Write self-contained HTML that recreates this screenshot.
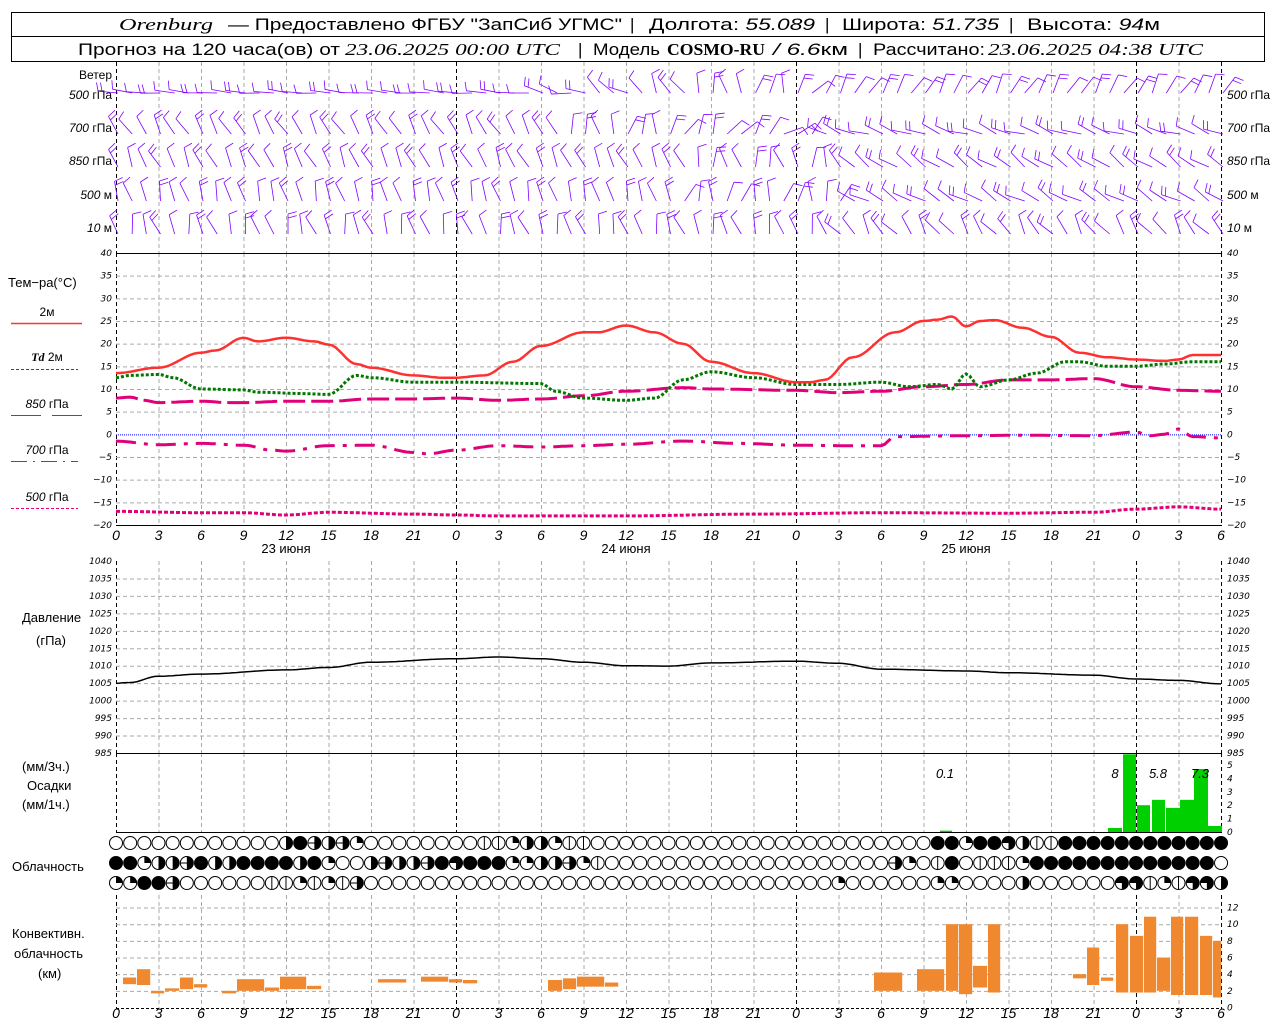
<!DOCTYPE html>
<html><head><meta charset="utf-8"><style>
html,body{margin:0;padding:0;background:#fff;width:1280px;height:1024px;overflow:hidden}
svg{display:block}
text{font-family:"Liberation Sans",sans-serif}
.it{font-style:italic}
</style></head><body>
<svg id="s" width="1280" height="1024" xmlns="http://www.w3.org/2000/svg">
<rect x="11.5" y="12.5" width="1253" height="49" fill="none" stroke="#000"/>
<line x1="11" y1="36.5" x2="1265" y2="36.5" stroke="#000"/>
<g font-size="17" fill="#000">
<text x="119" y="30" textLength="94" lengthAdjust="spacingAndGlyphs" style="font-family:'Liberation Serif',serif;font-style:italic">Orenburg</text>
<text x="228" y="30" textLength="394" lengthAdjust="spacingAndGlyphs">— Предоставлено ФГБУ "ЗапСиб УГМС"</text>
<text x="630" y="30">|</text>
<text x="649" y="30" textLength="166" lengthAdjust="spacingAndGlyphs">Долгота: <tspan class="it">55.089</tspan></text>
<text x="825" y="30">|</text>
<text x="842" y="30" textLength="157" lengthAdjust="spacingAndGlyphs">Широта: <tspan class="it">51.735</tspan></text>
<text x="1009" y="30">|</text>
<text x="1027" y="30" textLength="133" lengthAdjust="spacingAndGlyphs">Высота: <tspan class="it">94</tspan>м</text>
<text x="78" y="55" textLength="262" lengthAdjust="spacingAndGlyphs">Прогноз на 120 часа(ов) от</text>
<text x="345" y="55" textLength="215" lengthAdjust="spacingAndGlyphs" style="font-family:'Liberation Serif',serif;font-style:italic">23.06.2025 00:00 UTC</text>
<text x="578" y="55">|</text>
<text x="593" y="55" textLength="67" lengthAdjust="spacingAndGlyphs">Модель</text>
<text x="667" y="55" textLength="98" lengthAdjust="spacingAndGlyphs" style="font-family:'Liberation Serif',serif;font-weight:bold">COSMO-RU</text>
<text x="773" y="55" textLength="75" lengthAdjust="spacingAndGlyphs"><tspan class="it">/ 6.6</tspan>км</text>
<text x="858" y="55">|</text>
<text x="873" y="55" textLength="112" lengthAdjust="spacingAndGlyphs">Рассчитано:</text>
<text x="988" y="55" textLength="215" lengthAdjust="spacingAndGlyphs" style="font-family:'Liberation Serif',serif;font-style:italic">23.06.2025 04:38 UTC</text>
</g>
<g font-size="12" fill="#000">
<text x="112" y="79" text-anchor="end">Ветер</text>
<text x="112" y="99" text-anchor="end"><tspan class="it">500</tspan> гПа</text>
<text x="112" y="132" text-anchor="end"><tspan class="it">700</tspan> гПа</text>
<text x="112" y="165" text-anchor="end"><tspan class="it">850</tspan> гПа</text>
<text x="112" y="199" text-anchor="end"><tspan class="it">500</tspan> м</text>
<text x="112" y="232" text-anchor="end"><tspan class="it">10</tspan>   м</text>
<text x="1227" y="99"><tspan class="it">500</tspan> гПа</text>
<text x="1227" y="132"><tspan class="it">700</tspan> гПа</text>
<text x="1227" y="165"><tspan class="it">850</tspan> гПа</text>
<text x="1227" y="199"><tspan class="it">500</tspan> м</text>
<text x="1227" y="232"><tspan class="it">10</tspan>   м</text>
<text x="8" y="287" font-size="13">Тем−ра(°C)</text>
<text x="47" y="316" text-anchor="middle">2м</text>
<text x="47" y="361" text-anchor="middle"><tspan class="it" font-weight="bold" style="font-family:'Liberation Serif',serif">Td</tspan>  2м</text>
<text x="47" y="408" text-anchor="middle"><tspan class="it">850</tspan> гПа</text>
<text x="47" y="454" text-anchor="middle"><tspan class="it">700</tspan> гПа</text>
<text x="47" y="501" text-anchor="middle"><tspan class="it">500</tspan> гПа</text>
<text x="22" y="622" font-size="13">Давление</text>
<text x="36" y="645" font-size="13">(гПа)</text>
<text x="22" y="771" font-size="13">(мм/3ч.)</text>
<text x="27" y="790" font-size="13">Осадки</text>
<text x="22" y="809" font-size="13">(мм/1ч.)</text>
<text x="12" y="871" font-size="13">Облачность</text>
<text x="12" y="938" font-size="13">Конвективн.</text>
<text x="14" y="958" font-size="13">облачность</text>
<text x="38" y="978" font-size="13">(км)</text>
</g>
<line x1="11" y1="323.5" x2="82" y2="323.5" stroke="#f33" stroke-width="1.5"/>
<line x1="11" y1="369.5" x2="78" y2="369.5" stroke="#070" stroke-dasharray="3,2"/>
<line x1="11" y1="415.5" x2="41" y2="415.5" stroke="#e07" stroke-width="1"/><line x1="52" y1="415.5" x2="82" y2="415.5" stroke="#e07"/>
<line x1="11" y1="461.5" x2="78" y2="461.5" stroke="#e07" stroke-dasharray="16,6,2,6"/>
<line x1="11" y1="508.5" x2="78" y2="508.5" stroke="#e07" stroke-dasharray="3,2"/>
<g id="g"></g>
</svg>
<script>
var NS="http://www.w3.org/2000/svg",G=document.getElementById('g');
function el(t,a,txt){var e=document.createElementNS(NS,t);for(var k in a)e.setAttribute(k,a[k]);if(txt!==undefined)e.textContent=txt;G.appendChild(e);return e;}
function X(h){return 116+h*14.167;}
function TY(t){return 253+(40-t)*4.533;}
function PY(p){return 561+(1040-p)*3.4909;}
function MY(m){return 832-m*13.4;}
function CY(k){return 1007.5-k*8.33;}
function ln(x1,y1,x2,y2,c,w,d){var a={x1:x1,y1:y1,x2:x2,y2:y2,stroke:c,'stroke-width':w||1};if(d)a['stroke-dasharray']=d;return el('line',a);}
var panels=[[62,253],[253,525],[561,753],[753,832],[895,1008]];
panels.forEach(function(p){for(var h=0;h<=78;h+=3){var x=X(h)+0.5;var day=(h%24==0)||h==78;ln(x,p[0],x,p[1],day?'#000':'#aaa',1,'4,3');}});
for(var t=35;t>=-15;t-=5){if(t==0)continue;ln(116,TY(t)+0.5,1222,TY(t)+0.5,'#aaa',1,'4,3');}
ln(116,TY(0)+0.5,1222,TY(0)+0.5,'#00f',1,'1,1');
for(var p=1035;p>=990;p-=5)ln(116,PY(p)+0.5,1222,PY(p)+0.5,'#aaa',1,'4,3');
for(var k=2;k<=12;k+=2)ln(116,CY(k)+0.5,1222,CY(k)+0.5,'#aaa',1,'4,3');
ln(116,253.5,1222,253.5,'#000');ln(116,525.5,1222,525.5,'#000');
ln(116,753.5,1222,753.5,'#000');ln(116,832.5,1222,832.5,'#000');
ln(116,1008.5,1222,1008.5,'#000',1,'3,2');
function lab(x,y,s,anc,sz){el('text',{x:x,y:y,'font-size':sz||10,'text-anchor':anc||'start','class':'it',fill:'#000',style:sz?'':'font-family:DejaVu Sans,sans-serif;font-size:9px'},s);}
for(var t=40;t>=-20;t-=5){lab(112,TY(t)+3,String(t).replace('-','−'),'end');lab(1227,TY(t)+3,String(t).replace('-','−'));}
for(var p=1040;p>=985;p-=5){lab(112,PY(p)+3,p,'end');lab(1227,PY(p)+3,p);}
for(var m=0;m<=5;m++)lab(1227,MY(m)+3,m);
for(var k=0;k<=12;k+=2)lab(1227,CY(k)+3,k);
for(var h=0;h<=78;h+=3){lab(X(h),540,h%24,'middle',14);lab(X(h),1018,h%24,'middle',14);}
[["23 июня",12],["24 июня",36],["25 июня",60]].forEach(function(d){el('text',{x:X(d[1]),y:553,'font-size':13,'text-anchor':'middle',fill:'#000'},d[0]);});
function interp(pts,h){for(var i=0;i<pts.length-1;i++){if(h<=pts[i+1][0]){var a=pts[i],b=pts[i+1],f=(h-a[0])/(b[0]-a[0]);return a[1]+(b[1]-a[1])*(0.5-0.5*Math.cos(Math.PI*f));}}return pts[pts.length-1][1];}
function curve(pts,Y,c,w,d){var s='';for(var h=0;h<=78;h+=0.25){s+=(h?'L':'M')+X(h).toFixed(1)+','+Y(interp(pts,h)).toFixed(1);}var a={d:s,fill:'none',stroke:c,'stroke-width':w};if(d)a['stroke-dasharray']=d;el('path',a);}
var T2=[[0,13.5],[3,14.7],[6,18],[7,18.5],[9,21.3],[10,20.5],[12,21.3],[14,20.5],[15,19.8],[17,15.5],[18,14.7],[21,13],[23,12.5],[24,12.5],[26,13],[28,16],[30,19.5],[33,22.5],[34,22.5],[36,24],[38,22.5],[40,20],[42,16],[45,13.5],[48,11.5],[49,11.5],[50,12],[52,17],[55,22.5],[57,25],[58,25.3],[59,26],[60,23.8],[61,25],[62,25.2],[64,23.5],[66,21.5],[68,18],[70,17],[72,16.5],[74,16.2],[75,16.5],[76,17.5],[78,17.5]];
var TD=[[0,12.5],[1,13],[3,13.2],[4,12.5],[6,10],[9,9.8],[10,9.3],[13,9],[15,8.8],[17,13],[18,12.5],[21,11.5],[24,11.5],[30,11.2],[31,9.5],[33,8],[36,7.5],[38,8],[40,12],[42,13.8],[45,12.5],[48,11],[51,11],[54,11.5],[56,10.5],[58,11],[59,10],[60,13.3],[61,10.5],[63,12],[65,13.5],[67,16],[68,16],[70,15],[72,15],[74,15.5],[76,16],[78,16]];
var T85=[[0,8],[1,8.2],[2,7.5],[3,7],[6,7.3],[8,7],[9,7],[12,7.3],[15,7.3],[18,7.8],[21,7.8],[24,8],[27,7.5],[30,7.8],[33,8.5],[36,9.5],[40,10.3],[42,10],[48,9.7],[51,9.2],[54,9.5],[57,10.5],[60,11],[63,12],[66,12],[69,12.3],[72,10.5],[75,9.7],[78,9.5]];
var T70=[[0,-1.5],[3,-2.3],[6,-2],[9,-2.4],[11,-3.5],[12,-3.7],[15,-2.5],[18,-2.4],[21,-4],[22,-4.3],[24,-3.5],[27,-2.5],[30,-2.8],[33,-2.5],[36,-2.2],[40,-1.5],[44,-2],[48,-2.4],[51,-2.5],[54,-2.5],[55,-0.5],[60,-0.3],[64,-0.2],[69,-0.3],[72,0.5],[73,-0.3],[74,0],[75,1.2],[76,-0.5],[78,-0.8]];
var T50=[[0,-17],[6,-17.3],[9,-17.3],[12,-17.8],[15,-17.2],[21,-17.6],[24,-17.8],[27,-18],[36,-18],[45,-17.6],[54,-17.3],[63,-17.4],[69,-17.2],[72,-16.5],[75,-16],[78,-16.5]];
curve(T50,TY,'#e0007a',3,'4,2');
curve(T70,TY,'#e0007a',3,'20,8,4,8');
curve(T85,TY,'#e0007a',3,'22,6');
curve(TD,TY,'#007800',3,'3,2');
curve(T2,TY,'#ff3030',2.5);
var PR=[[0,1005],[1,1005.2],[3,1007],[6,1007.6],[12,1008.8],[15,1009.5],[18,1011],[24,1012],[27,1012.5],[30,1012],[33,1011],[36,1010],[39,1009.9],[42,1010.8],[48,1011.3],[51,1010.7],[54,1009],[60,1008.5],[63,1008],[69,1007.3],[72,1006.2],[75,1005.8],[78,1004.8]];
curve(PR,PY,'#000',1.5);
[[940,952,0.1],[1108,1122,0.3],[1123,1136,5.8],[1137,1150,2],[1152,1165,2.4],[1166,1180,1.8],[1180,1194,2.4],[1194,1208,4.7],[1208,1222,0.45]].forEach(function(b){el('rect',{x:b[0],y:MY(b[2]),width:b[1]-b[0],height:832-MY(b[2]),fill:'#00d000'});});
[["0.1",945],["8",1115],["5.8",1158],["7.3",1200]].forEach(function(l){lab(l[1],778,l[0],'middle',13);});
[[123,137,2.8,3.6],[137,151,2.7,4.6],[151,165,1.7,2],[165,180,2,2.3],[180,194,2.2,3.6],[194,208,2.4,2.8],[222,237,1.7,2],[237,265,2,3.4],[265,280,2,2.4],[280,307,2.2,3.7],[307,322,2.2,2.6],[378,407,3,3.4],[421,449,3.1,3.7],[449,463,3,3.4],[463,478,2.9,3.3],[548,563,2,3.3],[563,577,2.2,3.5],[577,605,2.5,3.7],[605,619,2.5,3],[874,903,2,4.2],[917,945,2,4.6],[946,959,2,10],[959,973,1.6,10],[973,988,2.4,5],[988,1001,1.8,10],[1073,1087,3.5,4],[1087,1100,2.7,7.2],[1101,1114,3.2,3.6],[1116,1129,1.8,10],[1130,1144,1.8,8.6],[1144,1157,1.8,10.9],[1157,1171,2,6],[1171,1184,1.5,10.9],[1185,1199,1.5,10.9],[1200,1213,1.5,8.6],[1213,1222,1.2,8]].forEach(function(b){el('rect',{x:b[0],y:CY(b[3]),width:b[1]-b[0]-0.8,height:CY(b[2])-CY(b[3]),fill:'#f08830'});});
function pad(s){while(s.length<79)s+='o';return s.slice(0,79);}
var rows=[pad("oooooooooooo"+"RfxRxq"+"oooooooo"+"||qRRq||"+"ooooo"+"ooooooooooooooooooo"+"ffqfftR||ffffffffffff"),
pad("ffqRRxfRRffffRfqooRxRRxftfffqqRRxq|oooo"+"oooooooooooooooo"+"xqo|fo|||q"+"fffffffffffff"),
pad("qqffxoooooo||q|q|xoooooooooooooooooooooooooooooooooqooooooqqooooRoooooooooo")];
rows[2]=rows[2].slice(0,71)+"tt|q|ttR";
rows.forEach(function(r,i){var y=843+i*20;for(var h=0;h<79;h++){var x=X(h),c=r[h],R=6.5;
el('circle',{cx:x,cy:y,r:R,fill:c=='f'?'#000':'#fff',stroke:'#000','stroke-width':1});
if(c=='L')el('path',{d:'M'+x+','+(y-R)+'A'+R+','+R+' 0 0 0 '+x+','+(y+R)+'Z',fill:'#000'});
if(c=='R'||c=='x')el('path',{d:'M'+x+','+(y-R)+'A'+R+','+R+' 0 0 1 '+x+','+(y+R)+'Z',fill:'#000'});
if(c=='x')ln(x-R,y,x+R,y,'#000');
if(c=='q')el('path',{d:'M'+x+','+y+'L'+x+','+(y-R)+'A'+R+','+R+' 0 0 1 '+(x+R)+','+y+'Z',fill:'#000'});
if(c=='t')el('path',{d:'M'+x+','+y+'L'+(x-R)+','+y+'A'+R+','+R+' 0 1 1 '+x+','+(y+R)+'Z',fill:'#000'});
if(c=='|')ln(x,y-R,x,y+R,'#000');}});
var rys=[95,128,161,195,228];
function ang(r,h){var n=Math.sin(h*1.7+r*3)*12;
if(r==0){if(h<30)return 185+n*0.5;if(h<50)return 185+(h-30)*6+n*2;return 300+n;}
if(r==1){if(h<30)return 240+n;if(h<50)return 250+(h-30)*4+n*2;return 200+n;}
if(r==2){if(h<40)return 245+n;if(h<52)return 260+n*2;return 215+n;}
if(r==3){if(h<40)return 255+n;if(h<52)return 280+n*2;return 210+n;}
return (h<50?255:235)+n*1.5;}
for(var r=0;r<5;r++)for(var h=0;h<79;h++){var x=X(h)+2,y=rys[r]+(r==0?-2:6),a=ang(r,h)*Math.PI/180,L=20;
var ex=x+L*Math.cos(a),ey=y+L*Math.sin(a);ln(x,y,ex,ey,'#8000ff',0.8);
var nb=(h*7+r*3)%3==0?2:1;for(var b=0;b<nb;b++){var bx=x+(L-b*4)*Math.cos(a),by=y+(L-b*4)*Math.sin(a),ba=a+75*Math.PI/180;
ln(bx,by,bx+9*Math.cos(ba),by+9*Math.sin(ba),'#8000ff',0.8);}}
</script>
</body></html>
